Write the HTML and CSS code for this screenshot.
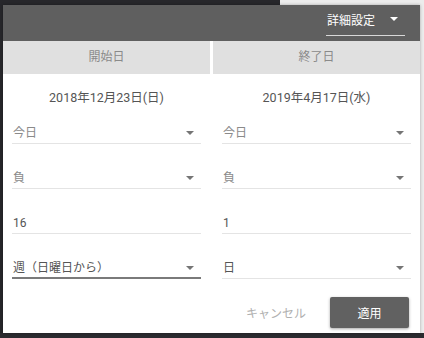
FILE: index.html
```html
<!DOCTYPE html>
<html lang="ja">
<head>
  <meta charset="UTF-8">
  <title>期間設定</title>
  <link rel="stylesheet" href="styles.css">
</head>
<body>
  <div class="backdrop">
    <div class="dialog">
      <div class="dialog-bar">
        <div class="mode-select">
          <span>詳細設定</span>
          <span class="caret caret-light"></span>
        </div>
      </div>

      <div class="columns">
        <!-- start date -->
        <div class="column">
          <div class="column-head">開始日</div>
          <div class="column-body">
            <div class="date-label">2018年12月23日(日)</div>
            <div class="field field-select muted">
              <span>今日</span><span class="caret"></span>
            </div>
            <div class="field field-select muted">
              <span>負</span><span class="caret"></span>
            </div>
            <div class="field">
              <span>16</span>
            </div>
            <div class="field field-select focused">
              <span>週（日曜日から）</span><span class="caret"></span>
            </div>
          </div>
        </div>

        <!-- end date -->
        <div class="column">
          <div class="column-head">終了日</div>
          <div class="column-body">
            <div class="date-label">2019年4月17日(水)</div>
            <div class="field field-select muted">
              <span>今日</span><span class="caret"></span>
            </div>
            <div class="field field-select muted">
              <span>負</span><span class="caret"></span>
            </div>
            <div class="field">
              <span>1</span>
            </div>
            <div class="field field-select">
              <span>日</span><span class="caret"></span>
            </div>
          </div>
        </div>
      </div>

      <div class="actions">
        <button type="button" class="btn-cancel">キャンセル</button>
        <button type="button" class="btn-apply">適用</button>
      </div>
    </div>
  </div>
</body>
</html>
```

FILE: styles.css
```css
html, body {
  margin: 0;
  padding: 0;
}
body {
  width: 424px;
  height: 338px;
  overflow: hidden;
  font-family: Roboto, "Noto Sans CJK JP", sans-serif;
  background: linear-gradient(to right, #27272b 0, #27272b 280px, #ececec 280px);
}
.backdrop {
  height: 338px;
  padding: 5px 4px 0 3px;
  box-sizing: border-box;
  background: linear-gradient(to bottom, transparent 0, transparent 333px, #2b2b2f 333px);
}
.dialog {
  background: white;
  height: 328px;
  display: flex;
  flex-direction: column;
  box-shadow: 0 0 3px rgba(0,0,0,0.3);
}
.dialog-bar {
  background: #5f5f5f;
  height: 36px;
  display: flex;
  justify-content: flex-end;
  align-items: flex-end;
  padding-right: 15px;
}
.mode-select {
  width: 79px;
  height: 31px;
  box-sizing: border-box;
  border-bottom: 1px solid #d8d8d8;
  margin-bottom: 5px;
  display: flex;
  align-items: center;
  justify-content: space-between;
  padding: 0 7px 2px 1px;
  color: white;
  font-size: 12px;
}
.caret {
  width: 0;
  height: 0;
  border-left: 4px solid transparent;
  border-right: 4px solid transparent;
  border-top: 4px solid #757575;
  margin-right: 6px;
}
.caret-light {
  border-top-color: white;
  margin-right: 0;
}
.columns {
  display: flex;
  gap: 3px;
}
.column {
  flex: 1;
}
.column-head {
  background: #e0e0e0;
  height: 33px;
  line-height: 33px;
  text-align: center;
  color: #8a8a8a;
  font-size: 12px;
}
.column-body {
  padding: 0 9px;
}
.date-label {
  text-align: center;
  color: #555;
  font-size: 12.5px;
  line-height: 18px;
  padding-top: 15px;
  height: 10px;
}
.field {
  height: 45px;
  box-sizing: border-box;
  border-bottom: 1px solid #e4e4e4;
  display: flex;
  align-items: flex-end;
  justify-content: space-between;
  padding: 0 1px 1px 1px;
  font-size: 12px;
  color: #555;
  line-height: 18px;
}
.field-select .caret {
  margin-bottom: 7px;
}
.muted {
  color: #8a8a8a;
}
.focused {
  border-bottom: 2px solid #7a7a7a;
  padding-bottom: 0;
}
.actions {
  display: flex;
  justify-content: flex-end;
  align-items: center;
  gap: 24px;
  padding: 18px 11px 0 0;
}
button {
  font-family: inherit;
  font-size: 12px;
  border: none;
  padding: 0;
  cursor: pointer;
}
.btn-cancel {
  background: none;
  color: #b0b0b0;
}
.btn-apply {
  background: #616161;
  color: white;
  width: 79px;
  height: 31px;
  border-radius: 2px;
  box-shadow: 0 1px 3px rgba(0,0,0,0.35);
}
```
